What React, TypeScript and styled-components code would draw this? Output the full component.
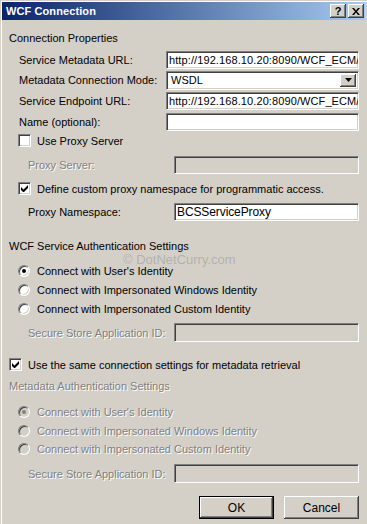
import React from "react";
import styled, { createGlobalStyle } from "styled-components";

const GlobalStyle = createGlobalStyle`
  html, body {
    margin: 0;
    padding: 0;
    background: #d4d0c8;
  }
  body {
    font-family: Tahoma, "Liberation Sans", Arial, sans-serif;
    font-size: 11px;
    color: #000;
  }
`;

export default function App() {
  return (
    <>
      <GlobalStyle />
      <Window>
        <TitleBar>
          <TitleText>WCF Connection</TitleText>
          <TitleButtons>
            <TitleButton>?</TitleButton>
            <TitleButton>
              <svg width="8" height="7" viewBox="0 0 8 7">
                <path d="M0 0h2l2 2.5L6 0h2L5 3.5 8 7H6L4 4.5 2 7H0l3-3.5z" fill="#000" />
              </svg>
            </TitleButton>
          </TitleButtons>
        </TitleBar>

        <Content>
          <Watermark>© DotNetCurry.com</Watermark>

          <Heading $mt={11}>Connection Properties</Heading>

          <FieldRow $mt={6}>
            <FieldLabel>Service Metadata URL:</FieldLabel>
            <TextBox $wide>http://192.168.10.20:8090/WCF_ECM/</TextBox>
          </FieldRow>
          <FieldRow $mt={2}>
            <FieldLabel>Metadata Connection Mode:</FieldLabel>
            <SelectBox>
              <SelectValue>WSDL</SelectValue>
              <SelectArrow>
                <svg width="7" height="4" viewBox="0 0 7 4">
                  <path d="M0 0h7L3.5 4z" fill="#000" />
                </svg>
              </SelectArrow>
            </SelectBox>
          </FieldRow>
          <FieldRow $mt={3}>
            <FieldLabel>Service Endpoint URL:</FieldLabel>
            <TextBox $wide>http://192.168.10.20:8090/WCF_ECM/</TextBox>
          </FieldRow>
          <FieldRow $mt={3}>
            <FieldLabel>Name (optional):</FieldLabel>
            <TextBox $wide />
          </FieldRow>

          <CheckRow $mt={3} $indent={9}>
            <CheckBox />
            <span>Use Proxy Server</span>
          </CheckRow>
          <FieldRow $mt={9} $indent={19}>
            <FieldLabel $disabled>Proxy Server:</FieldLabel>
            <TextBox $disabled />
          </FieldRow>

          <CheckRow $mt={8} $indent={9}>
            <CheckBox $checked />
            <span>Define custom proxy namespace for programmatic access.</span>
          </CheckRow>
          <FieldRow $mt={8} $indent={19}>
            <FieldLabel>Proxy Namespace:</FieldLabel>
            <TextBox>BCSServiceProxy</TextBox>
          </FieldRow>

          <Heading $mt={18}>WCF Service Authentication Settings</Heading>
          <CheckRow $mt={11} $indent={9}>
            <Radio $selected />
            <span>Connect with User's Identity</span>
          </CheckRow>
          <CheckRow $mt={6} $indent={9}>
            <Radio />
            <span>Connect with Impersonated Windows Identity</span>
          </CheckRow>
          <CheckRow $mt={6} $indent={9}>
            <Radio />
            <span>Connect with Impersonated Custom Identity</span>
          </CheckRow>
          <FieldRow $mt={8} $indent={19} $height={19}>
            <FieldLabel $disabled>Secure Store Application ID:</FieldLabel>
            <TextBox $disabled />
          </FieldRow>

          <CheckRow $mt={16}>
            <CheckBox $checked />
            <span>Use the same connection settings for metadata retrieval</span>
          </CheckRow>
          <Heading $mt={8} $disabled>Metadata Authentication Settings</Heading>
          <CheckRow $mt={12} $indent={9} $disabled>
            <Radio $selected $disabled />
            <span>Connect with User's Identity</span>
          </CheckRow>
          <CheckRow $mt={6} $indent={9} $disabled>
            <Radio $disabled />
            <span>Connect with Impersonated Windows Identity</span>
          </CheckRow>
          <CheckRow $mt={5} $indent={9} $disabled>
            <Radio $disabled />
            <span>Connect with Impersonated Custom Identity</span>
          </CheckRow>
          <FieldRow $mt={9} $indent={19} $height={19}>
            <FieldLabel $disabled>Secure Store Application ID:</FieldLabel>
            <TextBox $disabled />
          </FieldRow>

          <ButtonBar>
            <DialogButton $default>OK</DialogButton>
            <DialogButton>Cancel</DialogButton>
          </ButtonBar>
        </Content>
      </Window>
    </>
  );
}

const Window = styled.div`
  position: relative;
  width: 367px;
  height: 524px;
  box-sizing: border-box;
  padding: 2px 2px 0 2px;
  background: #d4d0c8;
  box-shadow: inset 1px 1px 0 #d4d0c8, inset 2px 2px 0 #ffffff;
  overflow: hidden;
`;

const TitleBar = styled.div`
  display: flex;
  align-items: center;
  justify-content: space-between;
  height: 18px;
  padding: 0 1px 0 4px;
  background: linear-gradient(to right, #0a246a, #a6caf0);
`;

const TitleText = styled.span`
  color: #fff;
  font-weight: bold;
  font-size: 11px;
  letter-spacing: 0.1px;
`;

const TitleButtons = styled.div`
  display: flex;
  gap: 2px;
`;

const TitleButton = styled.div`
  width: 16px;
  height: 14px;
  box-sizing: border-box;
  display: flex;
  align-items: center;
  justify-content: center;
  background: #d4d0c8;
  font-weight: bold;
  font-size: 11px;
  line-height: 1;
  box-shadow: inset -1px -1px 0 #404040, inset 1px 1px 0 #ffffff, inset -2px -2px 0 #808080;
`;

const Content = styled.div`
  display: flex;
  flex-direction: column;
  padding-left: 7px;
`;

const Watermark = styled.div`
  position: absolute;
  left: 123px;
  top: 252px;
  font-size: 13px;
  color: rgba(150, 150, 150, 0.55);
  pointer-events: none;
`;

const Heading = styled.div<{ $mt: number; $disabled?: boolean }>`
  margin-top: ${(p) => p.$mt}px;
  height: 14px;
  line-height: 14px;
  color: ${(p) => (p.$disabled ? "#808080" : "#000")};
  text-shadow: ${(p) => (p.$disabled ? "1px 1px 0 #fff" : "none")};
`;

const FieldRow = styled.div<{ $mt: number; $indent?: number; $height?: number }>`
  display: flex;
  align-items: center;
  margin-top: ${(p) => p.$mt}px;
  height: ${(p) => p.$height ?? 18}px;
  padding-left: ${(p) => p.$indent ?? 10}px;
  padding-right: 6px;
`;

const FieldLabel = styled.span<{ $disabled?: boolean }>`
  flex: 1;
  white-space: nowrap;
  color: ${(p) => (p.$disabled ? "#808080" : "#000")};
  text-shadow: ${(p) => (p.$disabled ? "1px 1px 0 #fff" : "none")};
`;

const sunken = `
  box-sizing: border-box;
  border: 1px solid;
  border-color: #808080 #ffffff #ffffff #808080;
  box-shadow: inset 1px 1px 0 #404040, inset -1px -1px 0 #d4d0c8;
`;

const TextBox = styled.div<{ $wide?: boolean; $disabled?: boolean }>`
  ${sunken}
  width: ${(p) => (p.$wide ? 193 : 185)}px;
  height: 100%;
  padding: 0 2px;
  display: flex;
  align-items: center;
  overflow: hidden;
  white-space: nowrap;
  font-size: ${(p) => (p.$wide ? 11 : 12)}px;
  letter-spacing: ${(p) => (p.$wide ? 0.1 : -0.1)}px;
  background: ${(p) => (p.$disabled ? "#d4d0c8" : "#fff")};
`;

const SelectBox = styled.div`
  ${sunken}
  width: 193px;
  height: 19px;
  display: flex;
  align-items: stretch;
  background: #fff;
  padding: 2px;
`;

const SelectValue = styled.div`
  flex: 1;
  display: flex;
  align-items: center;
  padding-left: 2px;
  font-size: 11px;
`;

const SelectArrow = styled.div`
  width: 16px;
  display: flex;
  align-items: center;
  justify-content: center;
  background: #d4d0c8;
  box-shadow: inset -1px -1px 0 #404040, inset 1px 1px 0 #ffffff, inset -2px -2px 0 #808080;
`;

const CheckRow = styled.div<{ $mt: number; $indent?: number; $disabled?: boolean }>`
  display: flex;
  align-items: center;
  gap: 6px;
  margin-top: ${(p) => p.$mt}px;
  height: 13px;
  padding-left: ${(p) => p.$indent ?? 0}px;
  white-space: nowrap;
  color: ${(p) => (p.$disabled ? "#808080" : "#000")};
  text-shadow: ${(p) => (p.$disabled ? "1px 1px 0 #fff" : "none")};
`;

const CheckBox = styled.div<{ $checked?: boolean }>`
  ${sunken}
  flex: none;
  width: 13px;
  height: 13px;
  background-color: #fff;
  background-repeat: no-repeat;
  background-position: center;
  background-image: ${(p) =>
    p.$checked
      ? `url("data:image/svg+xml,%3Csvg xmlns='http://www.w3.org/2000/svg' width='7' height='7'%3E%3Cpath d='M0 2v3l2 2h1l4-4V0L2.5 4.5z' fill='%23000'/%3E%3C/svg%3E")`
      : "none"};
`;

const Radio = styled.div<{ $selected?: boolean; $disabled?: boolean }>`
  position: relative;
  flex: none;
  width: 12px;
  height: 12px;
  margin-right: 1px;
  box-sizing: border-box;
  border-radius: 50%;
  border: 1px solid;
  border-color: #808080 #ffffff #ffffff #808080;
  box-shadow: inset 1px 1px 0 #404040, inset -1px -1px 0 #d4d0c8;
  background: ${(p) => (p.$disabled ? "#d4d0c8" : "#fff")};

  &::after {
    content: "";
    display: ${(p) => (p.$selected ? "block" : "none")};
    position: absolute;
    left: 3px;
    top: 3px;
    width: 4px;
    height: 4px;
    border-radius: 50%;
    background: ${(p) => (p.$disabled ? "#808080" : "#000")};
  }
`;

const ButtonBar = styled.div`
  display: flex;
  justify-content: flex-end;
  gap: 10px;
  margin-top: 13px;
  padding-right: 6px;
`;

const DialogButton = styled.div<{ $default?: boolean }>`
  width: 75px;
  height: 23px;
  box-sizing: border-box;
  display: flex;
  align-items: center;
  justify-content: center;
  font-size: 12px;
  background: #d4d0c8;
  border: ${(p) => (p.$default ? "1px solid #000" : "none")};
  box-shadow: ${(p) =>
    p.$default
      ? "inset -1px -1px 0 #404040, inset 1px 1px 0 #ffffff, inset -2px -2px 0 #808080"
      : "inset -1px -1px 0 #404040, inset 1px 1px 0 #ffffff, inset -2px -2px 0 #808080, inset 2px 2px 0 #d4d0c8"};
`;
